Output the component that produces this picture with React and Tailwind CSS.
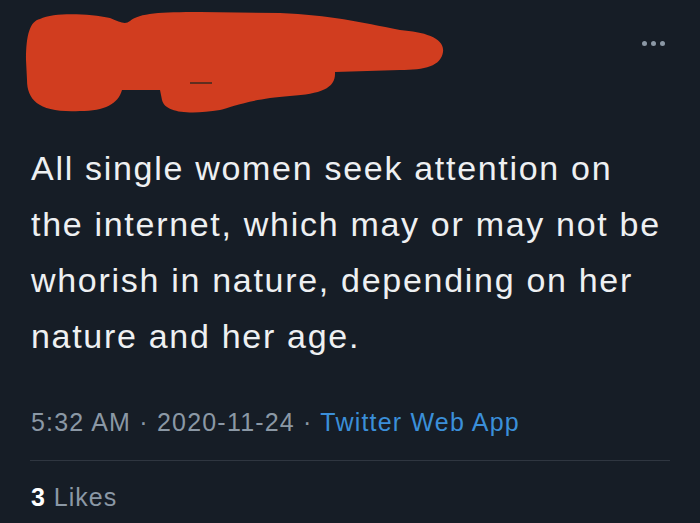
export default function App() {
  return (
    <div
      className="w-[700px] h-[523px] bg-[#161d26] overflow-hidden relative"
      style={{ fontFamily: '"Liberation Sans", Arial, sans-serif' }}
    >
      {/* Header: scribbled-out name */}
      <div className="h-[130px] flex justify-between items-start">
        <svg width="460" height="130" viewBox="0 0 460 130" className="shrink-0">
          <path
            d="M40 19 C 55 12, 90 14, 110 18 C 120 22, 125 25, 130 21 C 140 13, 160 12, 200 12 L 280 13 C 330 15, 360 22, 400 30 C 425 32, 445 38, 443 52 C 441 66, 425 70, 400 70 L 335 72 C 336 88, 322 94, 290 96 C 250 99, 232 107, 220 110 C 190 115, 165 113, 162 100 L 160 90 L 122 90 C 118 104, 105 111, 80 111 C 40 113, 27 101, 27 80 L 26 60 C 26 35, 30 21, 40 19 Z"
            fill="#d13d1f"
          />
          <path d="M190 83 L 212 83" stroke="#3a2a20" strokeWidth="1.5" />
        </svg>
        <div className="flex gap-[4px] mt-[41px] mr-[35px]">
          <span className="w-[5px] h-[5px] rounded-full bg-[#8b98a5]" />
          <span className="w-[5px] h-[5px] rounded-full bg-[#8b98a5]" />
          <span className="w-[5px] h-[5px] rounded-full bg-[#8b98a5]" />
        </div>
      </div>

      {/* Tweet body */}
      <p className="px-[31px] pt-[10px] text-[34px] leading-[56px] text-[#eef0f2] tracking-[1.7px] whitespace-nowrap">
        All single women seek attention on<br />
        the internet, which may or may not be<br />
        whorish in nature, depending on her<br />
        nature and her age.
      </p>

      {/* Meta */}
      <div className="px-[31px] mt-[43px] text-[25px] leading-[30px] text-[#8b98a5] tracking-[1.2px] whitespace-nowrap">
        5:32 AM · 2020-11-24 · <span className="text-[#3b8fd9]">Twitter Web App</span>
      </div>

      <div className="mx-[30px] mt-[23px] h-px bg-[#2f3640]" />

      <div className="px-[31px] mt-[21px] text-[25px] leading-[30px] text-[#8b98a5] tracking-[1px]">
        <span className="text-white font-bold">3</span> Likes
      </div>
    </div>
  );
}
